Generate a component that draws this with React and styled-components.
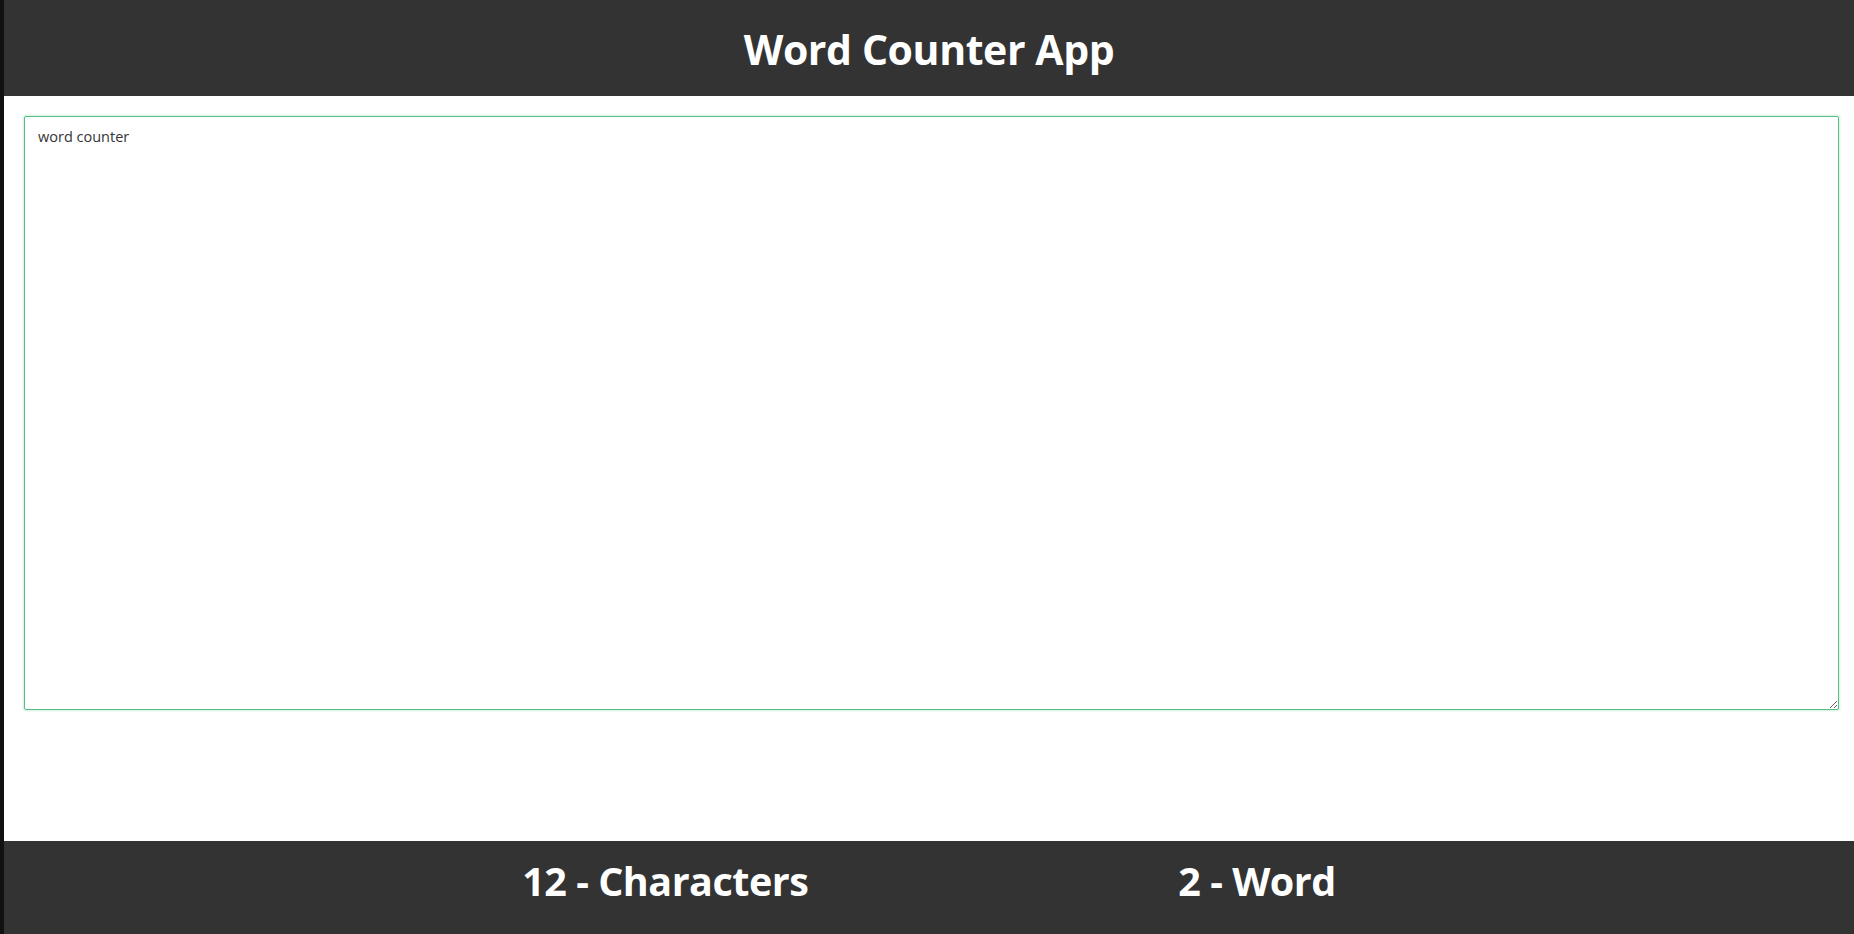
import React, { useState } from "react";
import styled, { createGlobalStyle } from "styled-components";

const GlobalStyle = createGlobalStyle`
  html, body {
    margin: 0;
    padding: 0;
    height: 100%;
    background: #111111;
  }
  #root {
    height: 100%;
  }
  * {
    box-sizing: border-box;
  }
`;

const Page = styled.div`
  height: 100vh;
  margin-left: 4px;
  display: flex;
  flex-direction: column;
  background: #ffffff;
  font-family: "Open Sans", "Noto Sans", sans-serif;
`;

const Header = styled.header`
  height: 96px;
  flex: none;
  background: #333333;
  display: flex;
  align-items: center;
  justify-content: center;
  padding-top: 3px;
`;

const Title = styled.h1`
  margin: 0;
  color: #ffffff;
  font-size: 41px;
  font-weight: 700;
  letter-spacing: -0.4px;
  line-height: 1;
`;

const Main = styled.main`
  flex: 1;
  padding: 20px 15px 0 20px;
`;

const Editor = styled.textarea`
  display: block;
  width: 100%;
  height: 594px;
  padding: 10px 13px;
  border: 1px solid #55c085;
  border-radius: 2px;
  box-shadow: 0 0 2px 1px rgba(85, 192, 133, 0.25);
  outline: none;
  resize: both;
  font-family: "Open Sans", "Noto Sans", sans-serif;
  font-size: 14.5px;
  line-height: 1.4;
  color: #333333;
  background: #ffffff;
`;

const Footer = styled.footer`
  height: 93px;
  flex: none;
  background: #333333;
  display: flex;
  align-items: center;
  justify-content: center;
  gap: 370px;
  padding-bottom: 12px;
`;

const Stat = styled.h2`
  margin: 0;
  color: #ffffff;
  font-size: 39.5px;
  font-weight: 700;
  letter-spacing: -0.5px;
  line-height: 1;
`;

export default function App() {
  const [text, setText] = useState("word counter");
  const words = text.trim() === "" ? 0 : text.trim().split(/\s+/).length;

  return (
    <>
      <GlobalStyle />
      <Page>
        <Header>
          <Title>Word Counter App</Title>
        </Header>
        <Main>
          <Editor value={text} onChange={(e) => setText(e.target.value)} />
        </Main>
        <Footer>
          <Stat>{text.length} - Characters</Stat>
          <Stat>{words} - Word</Stat>
        </Footer>
      </Page>
    </>
  );
}
